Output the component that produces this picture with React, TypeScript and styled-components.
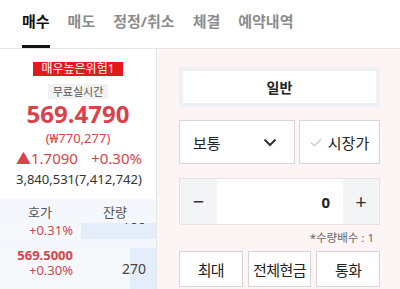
import React from "react";
import styled, { createGlobalStyle } from "styled-components";

const GlobalStyle = createGlobalStyle`
  body {
    margin: 0;
    font-family: "Noto Sans", "Noto Sans CJK KR", sans-serif;
    background: #fff;
  }
`;

const Page = styled.div`
  width: 400px;
  height: 289px;
  display: flex;
  flex-direction: column;
  overflow: hidden;
`;

const TabBar = styled.div`
  display: flex;
  gap: 18px;
  padding-left: 22px;
  height: 48px;
  border-bottom: 1px solid #e4e4e4;
`;

const Tab = styled.div<{ $active?: boolean }>`
  position: relative;
  padding-top: 10px;
  font-size: 15px;
  line-height: 22px;
  font-weight: 700;
  color: ${(p) => (p.$active ? "#111" : "#8c8c8c")};
  &::after {
    content: "";
    display: ${(p) => (p.$active ? "block" : "none")};
    position: absolute;
    left: 0;
    right: 0;
    bottom: 0;
    height: 3px;
    background: #111;
  }
`;

const Body = styled.div`
  flex: 1;
  display: flex;
  min-height: 0;
`;

const Left = styled.div`
  width: 156px;
  border-right: 1px solid #e6e6e6;
  display: flex;
  flex-direction: column;
`;

const Summary = styled.div`
  display: flex;
  flex-direction: column;
  align-items: center;
  padding-top: 13px;
  height: 137px;
`;

const RiskBadge = styled.div`
  background: #e11b1b;
  color: #fff;
  font-size: 12px;
  line-height: 14px;
  padding: 0 8px;
`;

const RealtimeBadge = styled.div`
  margin-top: 8px;
  background: #f1f2f3;
  color: #555;
  font-size: 11px;
  line-height: 15px;
  padding: 0 5px;
`;

const Price = styled.div`
  color: #d8434b;
  font-size: 24px;
  font-weight: 700;
  line-height: 30px;
`;

const Won = styled.div`
  color: #d8434b;
  font-size: 13px;
  line-height: 18px;
`;

const ChangeRow = styled.div`
  margin-top: 1px;
  align-self: stretch;
  display: flex;
  justify-content: space-between;
  padding: 0 14px 0 16px;
  color: #d8434b;
  font-size: 15px;
  line-height: 20px;
`;

const Volume = styled.div`
  margin-top: 2px;
  align-self: stretch;
  padding-left: 16px;
  color: #333;
  font-size: 13px;
  line-height: 18px;
`;

const OrderBook = styled.div`
  flex: 1;
  background: #f4f7fb;
  display: flex;
  flex-direction: column;
  overflow: hidden;
`;

const BookHeader = styled.div`
  height: 24px;
  display: grid;
  grid-template-columns: 81px 75px;
  align-items: center;
  font-size: 13px;
  color: #555;
`;

const HeadCell = styled.div<{ $pad: number }>`
  padding-left: ${(p) => p.$pad}px;
`;

const BookList = styled.div`
  display: flex;
  flex-direction: column;
  gap: 9px;
`;

const BookRow = styled.div<{ $h: number }>`
  height: ${(p) => p.$h}px;
  display: grid;
  grid-template-columns: 81px 75px;
  background: #f6f9fc;
  overflow: hidden;
`;

const PriceCell = styled.div`
  display: flex;
  flex-direction: column;
  justify-content: flex-start;
  padding-right: 8px;
  text-align: right;
  font-size: 13px;
  line-height: 15px;
`;

const CutPriceCell = styled(PriceCell)`
  justify-content: flex-end;
  padding-bottom: 2px;
`;

const RowPrice = styled.div`
  color: #d8434b;
  font-weight: 700;
`;

const RowRate = styled.div`
  color: #d8434b;
`;

const QtyCell = styled.div`
  display: flex;
  align-items: center;
  justify-content: flex-end;
  padding-right: 10px;
  font-size: 14px;
  color: #444;
`;

const CutQtyCell = styled(QtyCell)`
  align-items: flex-start;
  line-height: 14px;
  & > span {
    margin-top: -11px;
  }
`;

const Right = styled.div`
  flex: 1;
  background: #fdf5f5;
  padding: 18px 20px 0 22px;
  display: flex;
  flex-direction: column;
`;

const TypeBox = styled.div`
  background: #eef0f3;
  padding: 4px;
`;

const TypeInner = styled.div`
  background: #fff;
  height: 32px;
  display: flex;
  align-items: center;
  justify-content: center;
  font-size: 14px;
  font-weight: 700;
  color: #222;
`;

const SelectRow = styled.div`
  margin-top: 13px;
  display: grid;
  grid-template-columns: 116px 1fr;
  gap: 4px;
  height: 44px;
`;

const Select = styled.div`
  background: #fff;
  border: 1px solid #d6d6d6;
  display: flex;
  align-items: center;
  justify-content: space-between;
  padding: 0 17px 0 13px;
  font-size: 15px;
  color: #222;
`;

const MarketButton = styled.div`
  background: #fff;
  border: 1px solid #d6d6d6;
  display: flex;
  align-items: center;
  justify-content: center;
  gap: 6px;
  font-size: 15px;
  color: #222;
`;

const Stepper = styled.div`
  margin-top: 14px;
  height: 45px;
  border: 1px solid #e3e3e3;
  display: grid;
  grid-template-columns: 37px 1fr 36px;
  background: #fff;
`;

const StepButton = styled.div`
  background: #f3f4f6;
  display: flex;
  align-items: center;
  justify-content: center;
  font-size: 20px;
  color: #333;
`;

const Quantity = styled.div`
  display: flex;
  align-items: center;
  justify-content: flex-end;
  padding-right: 13px;
  font-size: 15px;
  font-weight: 700;
  color: #222;
`;

const Note = styled.div`
  margin-top: 6px;
  text-align: right;
  padding-right: 6px;
  font-size: 11.5px;
  line-height: 14px;
  color: #666;
`;

const QuickRow = styled.div`
  margin-top: 6px;
  display: grid;
  grid-template-columns: repeat(3, 1fr);
  gap: 5px;
  height: 36px;
`;

const QuickButton = styled.div`
  background: #fff;
  border: 1px solid #d6d6d6;
  display: flex;
  align-items: center;
  justify-content: center;
  font-size: 15px;
  letter-spacing: -0.6px;
  color: #222;
`;

const tabs = ["매수", "매도", "정정/취소", "체결", "예약내역"];

const bar = (ratio: number) =>
  `linear-gradient(to left, #e3eefa ${ratio}%, transparent ${ratio}%)`;

const Chevron = () => (
  <svg width="14" height="9" viewBox="0 0 14 9">
    <polyline points="1.5,1.5 7,7 12.5,1.5" fill="none" stroke="#333" strokeWidth="2" />
  </svg>
);

const Check = () => (
  <svg width="12" height="9" viewBox="0 0 12 9">
    <polyline points="1,4.5 4.5,8 11,1" fill="none" stroke="#c8c8c8" strokeWidth="1.2" />
  </svg>
);

export default function App() {
  return (
    <Page>
      <GlobalStyle />
      <TabBar>
        {tabs.map((t, i) => (
          <Tab key={t} $active={i === 0}>
            {t}
          </Tab>
        ))}
      </TabBar>
      <Body>
        <Left>
          <Summary>
            <RiskBadge>매우높은위험1</RiskBadge>
            <RealtimeBadge>무료실시간</RealtimeBadge>
            <Price>569.4790</Price>
            <Won>(₩770,277)</Won>
            <ChangeRow>
              <span>▲1.7090</span>
              <span>+0.30%</span>
            </ChangeRow>
            <Volume>3,840,531(7,412,742)</Volume>
          </Summary>
          <OrderBook>
            <BookHeader>
              <HeadCell $pad={28}>호가</HeadCell>
              <HeadCell $pad={22}>잔량</HeadCell>
            </BookHeader>
            <BookList>
              <BookRow $h={16}>
                <CutPriceCell>
                  <RowRate>+0.31%</RowRate>
                </CutPriceCell>
                <CutQtyCell style={{ background: bar(100) }}>
                  <span>100</span>
                </CutQtyCell>
              </BookRow>
              <BookRow $h={41}>
                <PriceCell>
                  <RowPrice>569.5000</RowPrice>
                  <RowRate>+0.30%</RowRate>
                </PriceCell>
                <QtyCell style={{ background: bar(35) }}>270</QtyCell>
              </BookRow>
            </BookList>
          </OrderBook>
        </Left>
        <Right>
          <TypeBox>
            <TypeInner>일반</TypeInner>
          </TypeBox>
          <SelectRow>
            <Select>
              <span>보통</span>
              <Chevron />
            </Select>
            <MarketButton>
              <Check />
              <span>시장가</span>
            </MarketButton>
          </SelectRow>
          <Stepper>
            <StepButton>−</StepButton>
            <Quantity>0</Quantity>
            <StepButton>+</StepButton>
          </Stepper>
          <Note>*수량배수 : 1</Note>
          <QuickRow>
            <QuickButton>최대</QuickButton>
            <QuickButton>전체현금</QuickButton>
            <QuickButton>통화</QuickButton>
          </QuickRow>
        </Right>
      </Body>
    </Page>
  );
}
